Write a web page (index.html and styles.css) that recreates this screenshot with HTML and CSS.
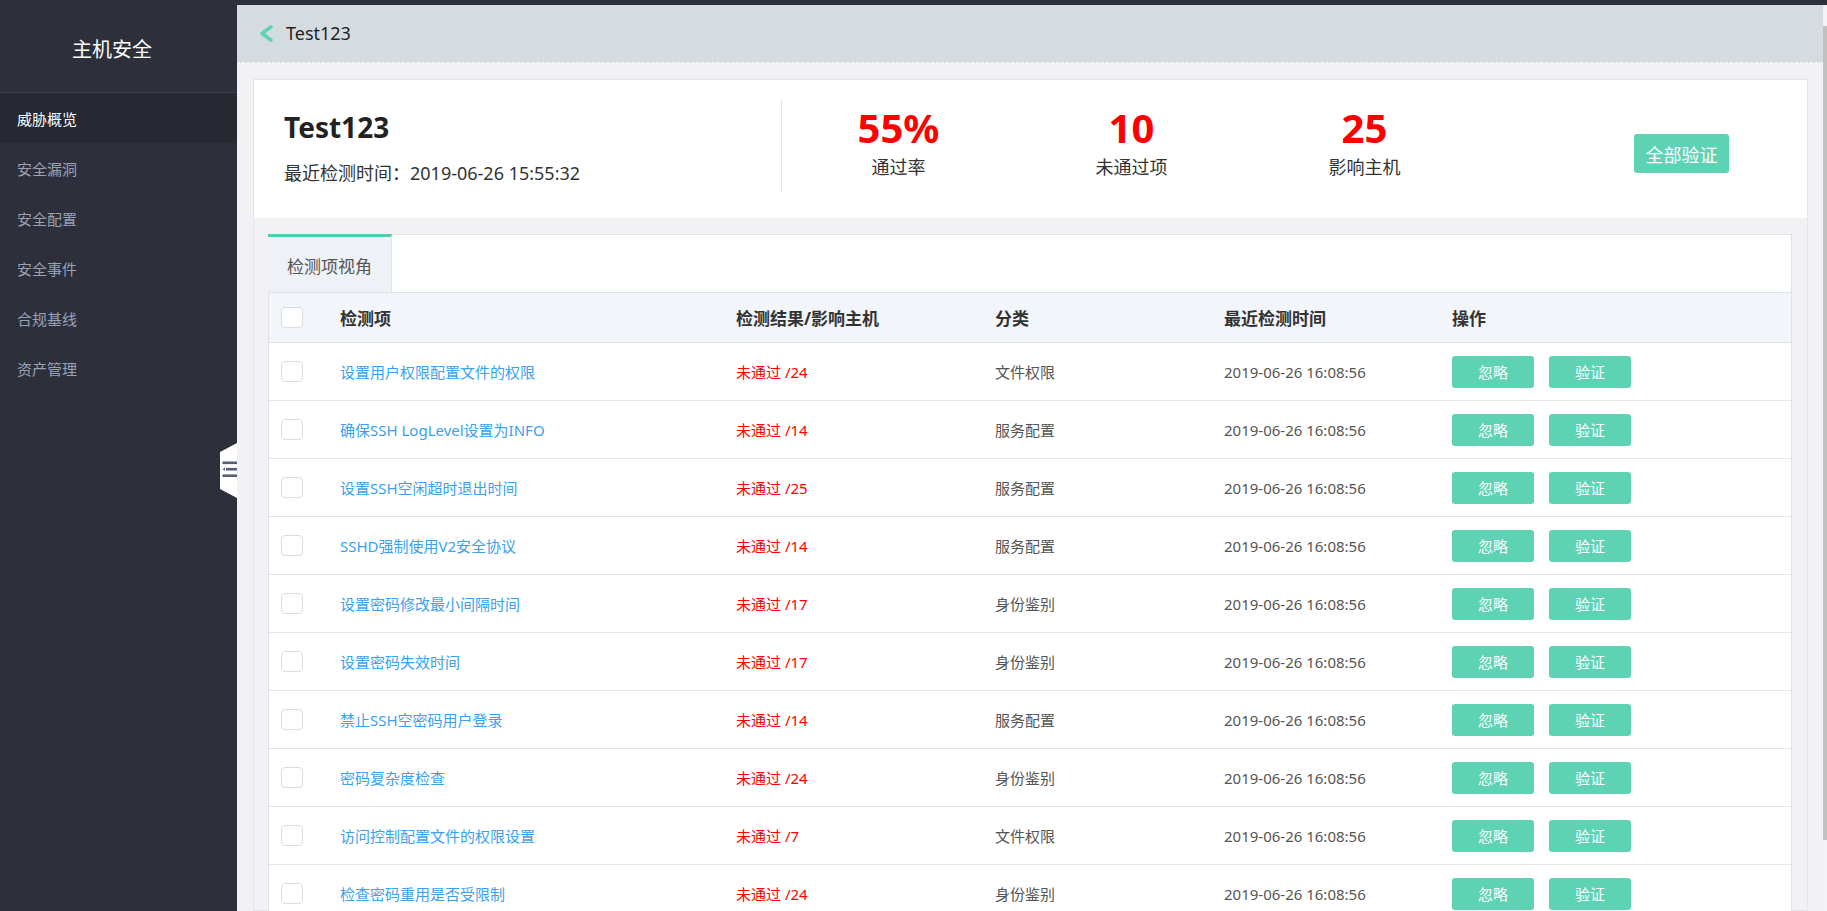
FILE: index.html
```html
<!DOCTYPE html>
<html lang="zh-CN">
<head>
<meta charset="utf-8">
<title>主机安全</title>
<link rel="stylesheet" href="styles.css">
</head>
<body>
<div class="app">
  <aside class="sidebar">
    <div class="brand">主机安全</div>
    <nav class="nav">
      <div class="nav-item active">威胁概览</div>
      <div class="nav-item">安全漏洞</div>
      <div class="nav-item">安全配置</div>
      <div class="nav-item">安全事件</div>
      <div class="nav-item">合规基线</div>
      <div class="nav-item">资产管理</div>
    </nav>
  </aside>

  <div class="handle">
    <svg width="17" height="55" viewBox="0 0 17 55">
      <polygon points="17,0 0,9 0,46 17,55" fill="#ffffff"/>
      <rect x="2.5" y="18.5" width="14.5" height="2.6" fill="#556075"/>
      <polygon points="2.5,26.2 5,24.6 5,27.8" fill="#556075"/>
      <rect x="6" y="24.9" width="11" height="2.6" fill="#556075"/>
      <rect x="2.5" y="31.4" width="14.5" height="2.6" fill="#556075"/>
    </svg>
  </div>

  <main class="main">
    <div class="page">
      <header class="topbar">
        <svg class="back" width="14" height="17" viewBox="0 0 14 17">
          <polyline points="12,2 3,8.5 12,15" fill="none" stroke="#5dd3b4" stroke-width="3.6" stroke-linecap="round" stroke-linejoin="round"/>
        </svg>
        <span class="topbar-title">Test123</span>
      </header>

      <div class="content">
        <section class="panel">
          <div class="summary">
            <div class="summary-left">
              <div class="summary-title">Test123</div>
              <div class="summary-sub">最近检测时间：2019-06-26 15:55:32</div>
            </div>
            <div class="stats">
              <div class="stat">
                <div class="stat-num">55%</div>
                <div class="stat-label">通过率</div>
              </div>
              <div class="stat">
                <div class="stat-num">10</div>
                <div class="stat-label">未通过项</div>
              </div>
              <div class="stat">
                <div class="stat-num">25</div>
                <div class="stat-label">影响主机</div>
              </div>
            </div>
            <button class="btn-all">全部验证</button>
          </div>

          <div class="body-area">
            <div class="tabbar">
              <div class="tab active">检测项视角</div>
            </div>
            <div class="table">
              <div class="row head">
                <div class="cell"><span class="check"></span></div>
                <div class="cell">检测项</div>
                <div class="cell">检测结果/影响主机</div>
                <div class="cell">分类</div>
                <div class="cell">最近检测时间</div>
                <div class="cell">操作</div>
              </div>

              <div class="row">
                <div class="cell"><span class="check"></span></div>
                <div class="cell link">设置用户权限配置文件的权限</div>
                <div class="cell fail">未通过 /24</div>
                <div class="cell muted">文件权限</div>
                <div class="cell muted">2019-06-26 16:08:56</div>
                <div class="cell ops"><button class="btn">忽略</button><button class="btn">验证</button></div>
              </div>
              <div class="row">
                <div class="cell"><span class="check"></span></div>
                <div class="cell link">确保SSH LogLevel设置为INFO</div>
                <div class="cell fail">未通过 /14</div>
                <div class="cell muted">服务配置</div>
                <div class="cell muted">2019-06-26 16:08:56</div>
                <div class="cell ops"><button class="btn">忽略</button><button class="btn">验证</button></div>
              </div>
              <div class="row">
                <div class="cell"><span class="check"></span></div>
                <div class="cell link">设置SSH空闲超时退出时间</div>
                <div class="cell fail">未通过 /25</div>
                <div class="cell muted">服务配置</div>
                <div class="cell muted">2019-06-26 16:08:56</div>
                <div class="cell ops"><button class="btn">忽略</button><button class="btn">验证</button></div>
              </div>
              <div class="row">
                <div class="cell"><span class="check"></span></div>
                <div class="cell link">SSHD强制使用V2安全协议</div>
                <div class="cell fail">未通过 /14</div>
                <div class="cell muted">服务配置</div>
                <div class="cell muted">2019-06-26 16:08:56</div>
                <div class="cell ops"><button class="btn">忽略</button><button class="btn">验证</button></div>
              </div>
              <div class="row">
                <div class="cell"><span class="check"></span></div>
                <div class="cell link">设置密码修改最小间隔时间</div>
                <div class="cell fail">未通过 /17</div>
                <div class="cell muted">身份鉴别</div>
                <div class="cell muted">2019-06-26 16:08:56</div>
                <div class="cell ops"><button class="btn">忽略</button><button class="btn">验证</button></div>
              </div>
              <div class="row">
                <div class="cell"><span class="check"></span></div>
                <div class="cell link">设置密码失效时间</div>
                <div class="cell fail">未通过 /17</div>
                <div class="cell muted">身份鉴别</div>
                <div class="cell muted">2019-06-26 16:08:56</div>
                <div class="cell ops"><button class="btn">忽略</button><button class="btn">验证</button></div>
              </div>
              <div class="row">
                <div class="cell"><span class="check"></span></div>
                <div class="cell link">禁止SSH空密码用户登录</div>
                <div class="cell fail">未通过 /14</div>
                <div class="cell muted">服务配置</div>
                <div class="cell muted">2019-06-26 16:08:56</div>
                <div class="cell ops"><button class="btn">忽略</button><button class="btn">验证</button></div>
              </div>
              <div class="row">
                <div class="cell"><span class="check"></span></div>
                <div class="cell link">密码复杂度检查</div>
                <div class="cell fail">未通过 /24</div>
                <div class="cell muted">身份鉴别</div>
                <div class="cell muted">2019-06-26 16:08:56</div>
                <div class="cell ops"><button class="btn">忽略</button><button class="btn">验证</button></div>
              </div>
              <div class="row">
                <div class="cell"><span class="check"></span></div>
                <div class="cell link">访问控制配置文件的权限设置</div>
                <div class="cell fail">未通过 /7</div>
                <div class="cell muted">文件权限</div>
                <div class="cell muted">2019-06-26 16:08:56</div>
                <div class="cell ops"><button class="btn">忽略</button><button class="btn">验证</button></div>
              </div>
              <div class="row">
                <div class="cell"><span class="check"></span></div>
                <div class="cell link">检查密码重用是否受限制</div>
                <div class="cell fail">未通过 /24</div>
                <div class="cell muted">身份鉴别</div>
                <div class="cell muted">2019-06-26 16:08:56</div>
                <div class="cell ops"><button class="btn">忽略</button><button class="btn">验证</button></div>
              </div>
            </div>
          </div>
        </section>
      </div>
    </div>
    <div class="scrollbar"><div class="thumb"></div></div>
  </main>
</div>
</body>
</html>
```

FILE: styles.css
```css
* { box-sizing: border-box; }

html, body {
  margin: 0;
  padding: 0;
  height: 911px;
  overflow: hidden;
}

body {
  background: #2d2f3b;
  font-family: "Noto Sans", "Noto Sans CJK SC", sans-serif;
  color: #333;
}

.app {
  position: relative;
  display: flex;
  height: 911px;
}

/* Sidebar */
.sidebar {
  width: 237px;
  flex: none;
  background: #2d2f3b;
}

.brand {
  height: 93px;
  border-bottom: 1px solid #3b3e4b;
  display: flex;
  align-items: center;
  justify-content: center;
  padding-right: 13px;
  padding-top: 4px;
  color: #ffffff;
  font-size: 20px;
}

.nav-item {
  height: 50px;
  display: flex;
  align-items: center;
  padding-left: 17px;
  font-size: 15px;
  color: #98a2b6;
}

.nav-item.active {
  background: #262832;
  color: #ffffff;
}

.handle {
  position: absolute;
  left: 220px;
  top: 443px;
  width: 17px;
  height: 55px;
  line-height: 0;
}

/* Main */
.main {
  flex: 1;
  display: flex;
  padding-top: 5px;
  min-width: 0;
}

.page {
  flex: 1;
  background: #f2f2f4;
  display: flex;
  flex-direction: column;
  min-width: 0;
}

.scrollbar {
  width: 4px;
  flex: none;
  background: #f3f3f5;
  padding-top: 21px;
}

.thumb {
  width: 4px;
  height: 814px;
  background: #c1c1c1;
}

.topbar {
  height: 58px;
  flex: none;
  background: #d4dce0;
  border-bottom: 1px dashed #f4f6f7;
  display: flex;
  align-items: center;
  padding-left: 22px;
  padding-bottom: 1px;
}

.back {
  display: block;
  margin-right: 13px;
}

.topbar-title {
  font-size: 18px;
  color: #1f1f1f;
}

.content {
  padding: 16px 15px 0 16px;
  flex: 1;
  min-height: 0;
}

.panel {
  border: 1px solid #e2e5e9;
  background: #f2f2f4;
  height: 100%;
}

/* Summary */
.summary {
  height: 138px;
  background: #ffffff;
  display: flex;
  align-items: flex-start;
}

.summary-left {
  width: 528px;
  flex: none;
  padding-left: 30px;
  margin-top: 19px;
  height: 93px;
  border-right: 1px solid #e6e6e6;
  padding-top: 10px;
}

.summary-title {
  font-size: 28px;
  font-weight: 700;
  line-height: 36px;
  color: #222;
}

.summary-sub {
  margin-top: 16px;
  font-size: 18px;
  line-height: 24px;
  color: #333;
}

.stats {
  display: flex;
  padding-top: 26px;
}

.stat {
  width: 233px;
  text-align: center;
}

.stat-num {
  font-size: 40px;
  font-weight: 700;
  line-height: 44px;
  color: #ff0000;
}

.stat-label {
  margin-top: 5px;
  font-size: 18px;
  line-height: 24px;
  color: #333;
}

.btn-all {
  margin-left: auto;
  margin-right: 78px;
  margin-top: 54px;
  width: 95px;
  height: 39px;
  border: none;
  border-radius: 3px;
  background: #5ed3b4;
  color: #ffffff;
  font-family: inherit;
  font-size: 18px;
  padding: 0;
}

/* Table area */
.body-area {
  padding: 16px 15px 0 14px;
}

.tabbar {
  height: 58px;
  background: #ffffff;
  border: 1px solid #dfe3e8;
  border-bottom: none;
  display: flex;
}

.tab {
  width: 124px;
  margin-top: -1px;
  margin-left: -1px;
  border-top: 3px solid #4fcdb0;
  border-right: 1px solid #dfe3e8;
  background: #eef1f5;
  color: #555;
  font-size: 17px;
  display: flex;
  align-items: center;
  padding-left: 19px;
  padding-top: 2px;
}

.table {
  background: #ffffff;
  border-left: 1px solid #dfe3e8;
  border-right: 1px solid #dfe3e8;
}

.row {
  display: grid;
  grid-template-columns: 71px 396px 259px 229px 228px 1fr;
  height: 58px;
  border-bottom: 1px solid #e3e6ea;
  align-items: center;
  font-size: 15px;
}

.row.head {
  height: 51px;
  background: #f2f5f9;
  border-top: 1px solid #dfe3e8;
  border-bottom: 1px solid #dfe3e8;
  font-size: 17px;
  font-weight: 700;
  color: #333;
}

.cell {
  white-space: nowrap;
}

.check {
  display: block;
  margin-left: 12px;
  width: 22px;
  height: 21px;
  border: 1px solid #d8dde4;
  border-radius: 4px;
  background: #ffffff;
}

.link { color: #3aa1f0; }
.fail { color: #ff0000; }
.muted { color: #555; }

.ops {
  display: flex;
  gap: 15px;
}

.btn {
  width: 82px;
  height: 32px;
  border: none;
  border-radius: 3px;
  background: #5ed3b4;
  color: #ffffff;
  font-family: inherit;
  font-size: 15px;
  padding: 0;
}
```
